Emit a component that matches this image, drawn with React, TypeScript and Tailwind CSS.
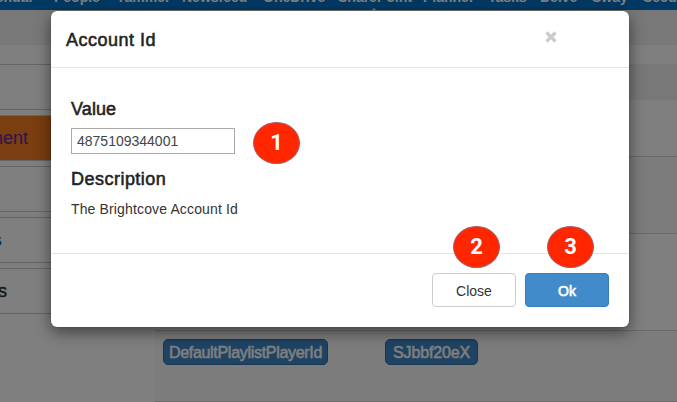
import React from "react";

const navItems = [
  { label: "Calendar", width: "w-[80px]" },
  { label: "People", width: "w-[62px]" },
  { label: "Yammer", width: "w-[66px]" },
  { label: "Newsfeed", width: "w-[81px]" },
  { label: "OneDrive", width: "w-[75px]" },
  { label: "SharePoint", width: "w-[85px]" },
  { label: "Planner", width: "w-[65px]" },
  { label: "Tasks", width: "w-[52px]" },
  { label: "Delve", width: "w-[52px]" },
  { label: "Sway", width: "w-[51px]" },
  { label: "Security", width: "w-[70px]" },
];

function TopNav() {
  return (
    <nav className="h-[10px] w-full overflow-hidden bg-[#0072c6]">
      <div className="-ml-[26px] -mt-[11px] flex text-[14px] font-bold leading-[16px] text-white">
        {navItems.map((item) => (
          <span key={item.label} className={`${item.width} shrink-0 whitespace-nowrap`}>
            {item.label}
          </span>
        ))}
      </div>
      <svg className="ml-[371px] mt-[3px] block" width="6" height="3" viewBox="0 0 6 3">
        <path d="M0 3 3 0 6 3Z" fill="#fff" />
      </svg>
    </nav>
  );
}

function MenuBox({ text, tone }: { text: string; tone: string }) {
  return (
    <div className={`flex h-[46px] w-[100px] items-center border border-l-0 border-[#c8c8c8] pt-px text-[18px] ${tone}`}>
      <span className="flex w-0 justify-start whitespace-nowrap">{text}</span>
    </div>
  );
}

function Page() {
  return (
    <div className="h-[402px] bg-white">
      <TopNav />
      <div className="h-[35px] bg-[#f0f0f0]" />
      <div className="flex h-[357px]">
        <aside className="flex w-[155px] flex-col gap-[5px] overflow-hidden pt-[19px]">
          <MenuBox text="" tone="bg-white" />
          <MenuBox text="ment" tone="bg-[#f47d20] text-[#5b2a91] -indent-[12px]" />
          <MenuBox text="" tone="bg-white" />
          <MenuBox text="s" tone="bg-white text-[#1b5b99] font-bold -indent-[8px]" />
          <MenuBox text="s" tone="bg-white text-[#333] -indent-[2px] [-webkit-text-stroke:0.5px]" />
        </aside>
        <main className="flex flex-1 flex-col pt-[19px]">
          <div className="h-[36px] bg-[#f0f0f0]" />
          <div className="h-[56px]" />
          <div className="h-[77px] border-t border-[#d4d4d4] bg-[#f9f9f9]" />
          <div className="h-[97px] border-t border-[#d4d4d4]" />
          <div className="flex h-[72px] items-start border-y border-[#d4d4d4] bg-[#f9f9f9] pl-2 pt-2">
            <span className="flex h-[26px] w-[165px] items-center justify-center rounded-[5px] border border-[#2e6da4] bg-[#3f87c7] pt-[2px] text-[16px] tracking-[-0.3px] text-white [-webkit-text-stroke:0.5px]">
              DefaultPlaylistPlayerId
            </span>
            <span className="ml-[57px] flex h-[26px] w-[93px] items-center justify-center rounded-[5px] border border-[#2e6da4] bg-[#3f87c7] pt-[2px] text-[16px] tracking-[-0.15px] text-white [-webkit-text-stroke:0.5px]">
              SJbbf20eX
            </span>
          </div>
        </main>
      </div>
    </div>
  );
}

function Marker({ value, place }: { value: number; place: string }) {
  return (
    <span
      className={`absolute flex h-[42px] w-[47px] items-center justify-center rounded-[50%] border border-[#a0606a] bg-[#ff2600] font-['Roboto','Liberation_Sans',sans-serif] text-[22px] font-bold leading-none text-white ${place}`}
    >
      {value}
    </span>
  );
}

function Dialog() {
  return (
    <section className="relative ml-[51px] mt-[11px] flex h-[316px] w-[578px] flex-col rounded-[6px] bg-white text-[#222] shadow-[0_5px_15px_rgba(0,0,0,0.5),0_0_1px_rgba(0,0,0,0.5)]">
      <header className="flex h-[57px] items-center justify-between border-b border-[#e5e5e5] pl-[15px] pr-[71px]">
        <h4 className="pt-[2px] text-[18px] tracking-[0.5px] [-webkit-text-stroke:0.55px]">Account Id</h4>
        <svg className="-mt-[5px]" width="14" height="14" viewBox="0 0 14 14" aria-label="Close dialog">
          <path d="M2.5 2.5 11.5 11.5M11.5 2.5 2.5 11.5" stroke="#ccc" strokeWidth="3.2" />
        </svg>
      </header>
      <div className="h-[185px] px-5 pt-[30px]">
        <h4 className="h-[30px] text-[18px] leading-[22px] tracking-[0.1px] [-webkit-text-stroke:0.55px]">Value</h4>
        <input
          className="block h-[26px] w-[164px] border border-[#ababab] px-[5px] text-[14px] text-[#444] outline-none"
          defaultValue="4875109344001"
        />
        <h4 className="mt-[14px] text-[18px] leading-[22px] tracking-[0.48px] [-webkit-text-stroke:0.55px]">Description</h4>
        <p className="mt-[10px] text-[14px] leading-[18px] tracking-[0.14px] text-[#333]">The Brightcove Account Id</p>
      </div>
      <footer className="flex flex-1 items-start justify-end gap-[9px] border-t border-[#e5e5e5] pr-5 pt-[19px]">
        <button className="h-[34px] w-[84px] rounded-[4px] border border-[#ccc] bg-white pt-[3px] text-[14px] text-[#333]">
          Close
        </button>
        <button className="h-[34px] w-[84px] rounded-[4px] border border-[#357ebd] bg-[#428bca] pt-[3px] text-[14px] text-white [-webkit-text-stroke:0.6px]">
          Ok
        </button>
      </footer>
      <Marker value={1} place="left-[202px] top-[111px]" />
      <Marker value={2} place="left-[402px] top-[215px]" />
      <Marker value={3} place="left-[496px] top-[215px]" />
    </section>
  );
}

export default function App() {
  return (
    <div className="relative h-[402px] w-[677px] overflow-hidden font-['Liberation_Sans',Arial,sans-serif]">
      <Page />
      <div className="absolute inset-0 bg-black/50">
        <Dialog />
      </div>
    </div>
  );
}
